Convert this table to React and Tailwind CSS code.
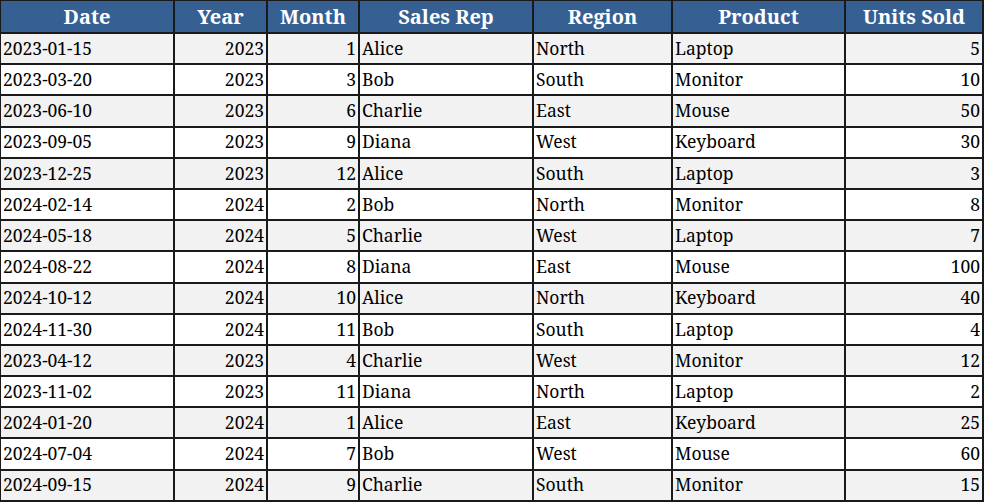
import React from 'react'

const rows = [
  ['2023-01-15', 2023, 1, 'Alice', 'North', 'Laptop', 5],
  ['2023-03-20', 2023, 3, 'Bob', 'South', 'Monitor', 10],
  ['2023-06-10', 2023, 6, 'Charlie', 'East', 'Mouse', 50],
  ['2023-09-05', 2023, 9, 'Diana', 'West', 'Keyboard', 30],
  ['2023-12-25', 2023, 12, 'Alice', 'South', 'Laptop', 3],
  ['2024-02-14', 2024, 2, 'Bob', 'North', 'Monitor', 8],
  ['2024-05-18', 2024, 5, 'Charlie', 'West', 'Laptop', 7],
  ['2024-08-22', 2024, 8, 'Diana', 'East', 'Mouse', 100],
  ['2024-10-12', 2024, 10, 'Alice', 'North', 'Keyboard', 40],
  ['2024-11-30', 2024, 11, 'Bob', 'South', 'Laptop', 4],
  ['2023-04-12', 2023, 4, 'Charlie', 'West', 'Monitor', 12],
  ['2023-11-02', 2023, 11, 'Diana', 'North', 'Laptop', 2],
  ['2024-01-20', 2024, 1, 'Alice', 'East', 'Keyboard', 25],
  ['2024-07-04', 2024, 7, 'Bob', 'West', 'Mouse', 60],
  ['2024-09-15', 2024, 9, 'Charlie', 'South', 'Monitor', 15],
]

const headers = ['Date', 'Year', 'Month', 'Sales Rep', 'Region', 'Product', 'Units Sold']
const widths = ['w-[174px]', 'w-[93px]', 'w-[92px]', 'w-[174px]', 'w-[139px]', 'w-[173px]', 'w-[138px]']
// numeric columns sit on the right, like a spreadsheet
const numeric = [false, true, true, false, false, false, true]

const App = () => {
  return (
    <div className="w-[985px] h-[503px] overflow-hidden bg-white font-['Noto_Serif','DejaVu_Serif',serif]">
      <table className="table-fixed border-collapse -ml-px -mt-px text-black">
        <colgroup>
          {widths.map((w, i) => (
            <col key={i} className={w} />
          ))}
        </colgroup>
        <thead>
          <tr className="h-[33px] bg-[#366092]">
            {headers.map((h) => (
              <th key={h} className="border-2 border-[#1a1a1a] text-white font-bold text-[20px] text-center p-0 leading-none">
                {h}
              </th>
            ))}
          </tr>
        </thead>
        <tbody>
          {rows.map((row, r) => (
            <tr key={r} className={r % 2 === 0 ? 'h-[31.2px] bg-[#f2f2f2]' : 'h-[31.2px] bg-white'}>
              {row.map((cell, c) => (
                <td
                  key={c}
                  className={`border-2 border-[#1a1a1a] text-[17.5px] leading-none py-0 px-0.5 ${numeric[c] ? 'text-right' : 'text-left'}`}
                >
                  {cell}
                </td>
              ))}
            </tr>
          ))}
        </tbody>
      </table>
    </div>
  )
}

export default App
